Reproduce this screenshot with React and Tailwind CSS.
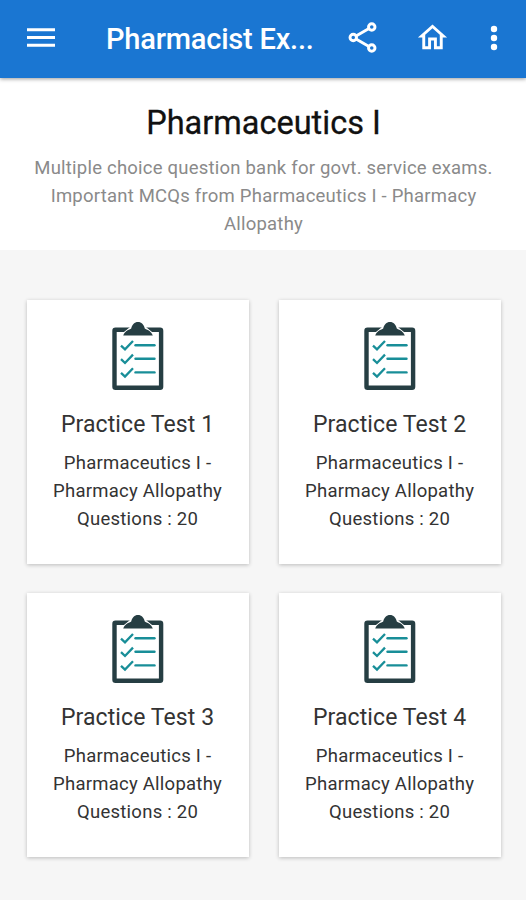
const tests = [1, 2, 3, 4];

function Clipboard() {
  return (
    <svg className="ml-px h-[70px] w-[54px] shrink-0" viewBox="0 0 54 70">
      <rect x="3.5" y="8.8" width="46.6" height="58" rx="1" fill="#fff" stroke="#263e43" strokeWidth="4.4" />
      <path d="M9 11.5 H12.5 L19 6 H35 L41.5 11.5 H45 V14 H9Z" fill="#fff" />
      <path d="M12.2 14.6 C13.5 10 17 9.2 20.2 7.4 C21.2 3.6 23.5 1 27 1 C30.5 1 32.8 3.6 33.8 7.4 C37 9.2 40.5 10 41.8 14.6Z" fill="#263e43" stroke="#fff" strokeWidth="1.6" paintOrder="stroke" />
      {[24.2, 37.8, 51.4].map((y) => (
        <g key={y} transform={`translate(0 ${y})`} fill="none" stroke="#188e98">
          <path d="M10 .4 L14 4.2 L22 -4.2" strokeWidth="2.3" />
          <path d="M24.5 0 H43.5" strokeWidth="2.4" strokeLinecap="round" />
        </g>
      ))}
    </svg>
  );
}

function TestCard({ number }) {
  return (
    <article className="flex h-[264px] flex-col items-center bg-white pt-[21px] whitespace-nowrap shadow-[0_1px_4px_rgba(0,0,0,0.24)]">
      <Clipboard />
      <h2 className="mt-[18px] text-[23px] leading-[32px] tracking-[0.1px] text-[#333]">Practice Test {number}</h2>
      <p className="mt-[8px] text-center text-[18.5px] leading-[28.2px] tracking-[0.25px] text-[#333]">
        Pharmaceutics I -<br />Pharmacy Allopathy<br />Questions : 20
      </p>
    </article>
  );
}

export default function App() {
  return (
    <div className="flex h-[900px] w-[526px] flex-col overflow-hidden bg-[#f6f6f6] font-['Roboto','Liberation_Sans',sans-serif]">
      <header className="z-10 flex h-[78px] shrink-0 items-center bg-[#1a76d2] pb-[3px] pl-[27px] text-white shadow-[0_1px_4px_rgba(0,0,0,0.4)]">
        <svg className="h-[20px] w-[28px]" viewBox="0 0 28 20" fill="none" stroke="currentColor" strokeWidth="3.1">
          <path d="M0 1.7H28M0 9.5H28M0 17.2H28" />
        </svg>
        <h1 className="ml-[51px] w-[236px] pt-[2px] text-[29px] leading-[36px] font-medium tracking-[-0.2px] whitespace-nowrap">Pharmacist Ex...</h1>
        <svg className="ml-[2px] size-[37px]" viewBox="0 0 24 24" fill="none" stroke="currentColor" strokeWidth="1.9">
          <circle cx="18" cy="5.2" r="2.1" />
          <circle cx="6" cy="12" r="2.1" />
          <circle cx="18" cy="18.8" r="2.1" />
          <path d="M7.8 11 L16.2 6.2 M7.8 13 L16.2 17.8" />
        </svg>
        <svg className="ml-[34px] size-[35px]" viewBox="0 0 24 24" fill="currentColor">
          <path d="M12 5.69l5 4.5V18h-2v-6H9v6H7v-7.81l5-4.5M12 3L2 12h3v8h6v-6h2v6h6v-8h3L12 3z" />
        </svg>
        <svg className="ml-[40px] h-[26px] w-[8px]" viewBox="0 0 8 26" fill="currentColor">
          <circle cx="4" cy="4" r="3.2" />
          <circle cx="4" cy="13" r="3.2" />
          <circle cx="4" cy="22" r="3.2" />
        </svg>
      </header>
      <section className="flex h-[172px] shrink-0 flex-col items-center bg-white pt-[25px] whitespace-nowrap">
        <h2 className="ml-px text-[32.5px] leading-[40px] text-[#111] [-webkit-text-stroke:0.3px_#111]">Pharmaceutics I</h2>
        <p className="mt-[11px] ml-px text-center text-[18.5px] leading-[28.2px] tracking-[0.22px] text-[#8a8a8a]">
          Multiple choice question bank for govt. service exams.<br />Important MCQs from Pharmaceutics I - Pharmacy<br />Allopathy
        </p>
      </section>
      <main className="grid grid-cols-2 gap-x-[30px] gap-y-[28.6px] pt-[50px] pr-[25.4px] pl-[26.6px]">
        {tests.map((n) => <TestCard key={n} number={n} />)}
      </main>
    </div>
  );
}
